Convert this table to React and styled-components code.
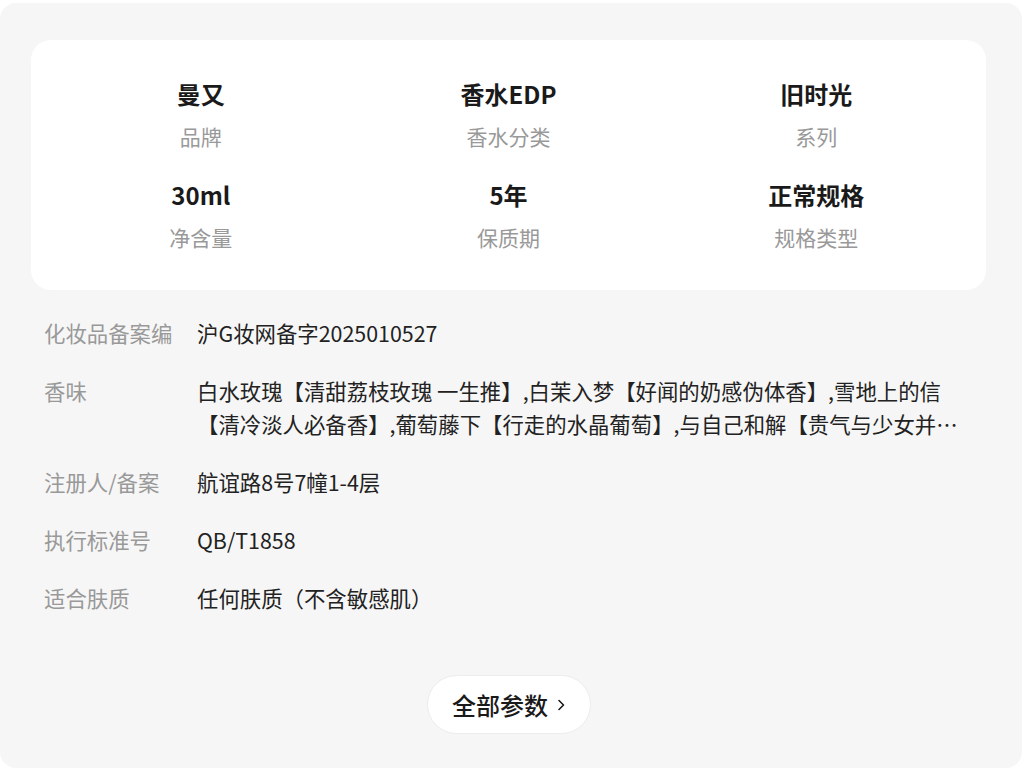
import React from "react";
import styled, { createGlobalStyle } from "styled-components";

const Global = createGlobalStyle`
  html, body { margin: 0; padding: 0; background: #ffffff; }
  body { font-family: "Noto Sans CJK SC", "Noto Sans", sans-serif; }
`;

const Panel = styled.div`
  box-sizing: border-box;
  width: 1022px;
  height: 765px;
  margin-top: 3px;
  background: #f6f6f6;
  border-radius: 16px;
  padding: 37px 36px 0 31px;
  display: flex;
  flex-direction: column;
`;

const Card = styled.div`
  background: #ffffff;
  border-radius: 20px;
  padding: 38px 16px 37px;
  display: grid;
  grid-template-columns: repeat(3, 1fr);
  row-gap: 27px;
`;

const Stat = styled.div`
  display: flex;
  flex-direction: column;
  align-items: center;
`;

const StatValue = styled.div`
  font-size: 24px;
  font-weight: 700;
  line-height: 32px;
  color: #1a1a1a;
`;

const StatLabel = styled.div`
  margin-top: 10px;
  font-size: 21px;
  line-height: 32px;
  color: #999999;
`;

const Details = styled.div`
  margin-top: 26px;
  padding: 0 20px 0 13px;
  display: flex;
  flex-direction: column;
  gap: 25px;
`;

const Row = styled.div`
  display: flex;
  font-size: 21.4px;
  line-height: 33px;
`;

const RowLabel = styled.div`
  flex: 0 0 153px;
  color: #999999;
`;

const RowValue = styled.div`
  flex: 1;
  min-width: 0;
  color: #222222;
  display: -webkit-box;
  -webkit-box-orient: vertical;
  -webkit-line-clamp: 2;
  overflow: hidden;
`;

const Footer = styled.div`
  margin-top: 61px;
  display: flex;
  justify-content: center;
  padding-left: 1px;
`;

const AllButton = styled.button`
  box-sizing: border-box;
  height: 59px;
  padding: 0 24px 0 24px;
  border-radius: 30px;
  border: 1px solid #ececec;
  background: #ffffff;
  font-family: inherit;
  font-size: 24px;
  font-weight: 500;
  color: #1a1a1a;
  display: flex;
  align-items: center;
  gap: 8px;
  cursor: pointer;
`;

const Chevron = styled.svg`
  width: 10px;
  height: 14px;
  margin-top: 1px;
`;

const stats = [
  ["曼又", "品牌"],
  ["香水EDP", "香水分类"],
  ["旧时光", "系列"],
  ["30ml", "净含量"],
  ["5年", "保质期"],
  ["正常规格", "规格类型"],
];

const rows = [
  ["化妆品备案编", "沪G妆网备字2025010527"],
  [
    "香味",
    "白水玫瑰【清甜荔枝玫瑰 一生推】,白茉入梦【好闻的奶感伪体香】,雪地上的信【清冷淡人必备香】,葡萄藤下【行走的水晶葡萄】,与自己和解【贵气与少女并存】,旧时光【复古木质调】",
  ],
  ["注册人/备案", "航谊路8号7幢1-4层"],
  ["执行标准号", "QB/T1858"],
  ["适合肤质", "任何肤质（不含敏感肌）"],
];

export default function App() {
  return (
    <>
      <Global />
      <Panel>
        <Card>
          {stats.map(([v, l]) => (
            <Stat key={l}>
              <StatValue>{v}</StatValue>
              <StatLabel>{l}</StatLabel>
            </Stat>
          ))}
        </Card>
        <Details>
          {rows.map(([l, v]) => (
            <Row key={l}>
              <RowLabel>{l}</RowLabel>
              <RowValue>{v}</RowValue>
            </Row>
          ))}
        </Details>
        <Footer>
          <AllButton>
            全部参数
            <Chevron viewBox="0 0 10 14">
              <path d="M3 2.5 L7.5 7 L3 11.5" fill="none" stroke="#1a1a1a" strokeWidth="1.6" strokeLinecap="round" strokeLinejoin="round" />
            </Chevron>
          </AllButton>
        </Footer>
      </Panel>
    </>
  );
}
